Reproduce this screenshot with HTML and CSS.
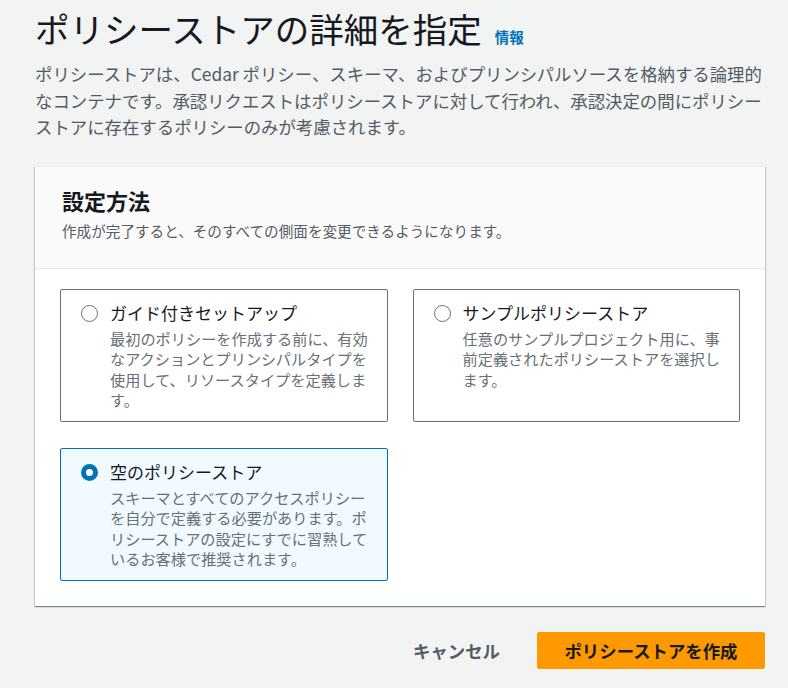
FILE: index.html
```html
<!DOCTYPE html>
<html lang="ja">
<head>
<meta charset="utf-8">
<title>ポリシーストアの詳細を指定</title>
<link rel="stylesheet" href="styles.css">
</head>
<body>
<div class="page">
  <header class="page-header">
    <h1 class="title">ポリシーストアの詳細を指定<a class="info-link" href="#">情報</a></h1>
    <p class="description">ポリシーストアは、Cedar ポリシー、スキーマ、およびプリンシパルソースを格納する論理的<br>なコンテナです。承認リクエストはポリシーストアに対して行われ、承認決定の間にポリシー<br>ストアに存在するポリシーのみが考慮されます。</p>
  </header>

  <section class="container">
    <div class="container-header">
      <h2 class="container-title">設定方法</h2>
      <p class="container-sub">作成が完了すると、そのすべての側面を変更できるようになります。</p>
    </div>
    <div class="container-body">
      <div class="tiles">
        <label class="tile">
          <span class="radio"></span>
          <span class="tile-text">
            <span class="tile-title">ガイド付きセットアップ</span>
            <span class="tile-desc">最初のポリシーを作成する前に、有効なアクションとプリンシパルタイプを使用して、リソースタイプを定義します。</span>
          </span>
        </label>
        <label class="tile">
          <span class="radio"></span>
          <span class="tile-text">
            <span class="tile-title">サンプルポリシーストア</span>
            <span class="tile-desc">任意のサンプルプロジェクト用に、事前定義されたポリシーストアを選択します。</span>
          </span>
        </label>
        <label class="tile tile-selected">
          <span class="radio radio-checked"></span>
          <span class="tile-text">
            <span class="tile-title">空のポリシーストア</span>
            <span class="tile-desc">スキーマとすべてのアクセスポリシーを自分で定義する必要があります。ポリシーストアの設定にすでに習熟しているお客様で推奨されます。</span>
          </span>
        </label>
      </div>
    </div>
  </section>

  <footer class="actions">
    <button class="btn btn-link" type="button">キャンセル</button>
    <button class="btn btn-primary" type="button">ポリシーストアを作成</button>
  </footer>
</div>
</body>
</html>
```

FILE: styles.css
```css
* { box-sizing: border-box; }

html, body {
  margin: 0;
  padding: 0;
  background: #f2f3f3;
}

body {
  font-family: "Noto Sans CJK JP", "Noto Sans", sans-serif;
  color: #16191f;
}

.page {
  width: 788px;
  padding: 6px 23px 0 35px;
}

.title {
  margin: 0;
  font-size: 34.5px;
  line-height: 44px;
  font-weight: 400;
  color: #16191f;
  display: flex;
  align-items: baseline;
}

.info-link {
  margin-left: 13px;
  font-size: 14.5px;
  font-weight: 700;
  color: #0073bb;
  text-decoration: none;
}

.description {
  margin: 2px 0 0;
  font-size: 17.4px;
  line-height: 26.5px;
  color: #545b64;
  white-space: nowrap;
}

.container {
  margin-top: 25px;
  background: #ffffff;
  box-shadow: 0 1px 1px 0 rgba(0, 28, 36, 0.3), 1px 1px 1px 0 rgba(0, 28, 36, 0.15), -1px 1px 1px 0 rgba(0, 28, 36, 0.15);
  border-top: 1px solid #eaeded;
}

.container-header {
  background: #fafafa;
  border-bottom: 1px solid #eaeded;
  padding: 18px 25px 26px 27px;
}

.container-title {
  margin: 0;
  font-size: 22px;
  line-height: 30px;
  font-weight: 700;
  color: #16191f;
}

.container-sub {
  margin: 5px 0 0;
  font-size: 14.6px;
  line-height: 22px;
  color: #545b64;
}

.container-body {
  padding: 20px 25px 25px;
}

.tiles {
  display: grid;
  grid-template-columns: 1fr 1fr;
  gap: 26px 25px;
}

.tile {
  display: flex;
  align-items: flex-start;
  gap: 12px;
  min-height: 133px;
  padding: 11px 14px 10px 20px;
  border: 1px solid #687078;
  border-radius: 2px;
  background: #ffffff;
  cursor: pointer;
}

.tile-selected {
  border-color: #0073bb;
  background: #f1faff;
}

.radio {
  flex: none;
  width: 17px;
  height: 17px;
  margin-top: 4px;
  border: 1.5px solid #687078;
  border-radius: 50%;
  background: #ffffff;
}

.radio-checked {
  border: 5px solid #0073bb;
  background: #ffffff;
}

.tile-text {
  display: flex;
  flex-direction: column;
  gap: 3px;
}

.tile-title {
  font-size: 17px;
  line-height: 24px;
  color: #16191f;
}

.tile-desc {
  font-size: 15.2px;
  line-height: 20.5px;
  color: #687078;
}

.actions {
  display: flex;
  justify-content: flex-end;
  align-items: center;
  gap: 16px;
  margin-top: 26px;
}

.btn {
  font-family: inherit;
  font-weight: 700;
  font-size: 17.4px;
  height: 37px;
  border-radius: 2px;
  cursor: pointer;
}

.btn-link {
  background: transparent;
  border: 1px solid transparent;
  color: #545b64;
  padding: 0 20px;
}

.btn-primary {
  background: #ff9900;
  border: 1px solid #ff9900;
  color: #16191f;
  padding: 0 25px;
  width: 228px;
}
```
